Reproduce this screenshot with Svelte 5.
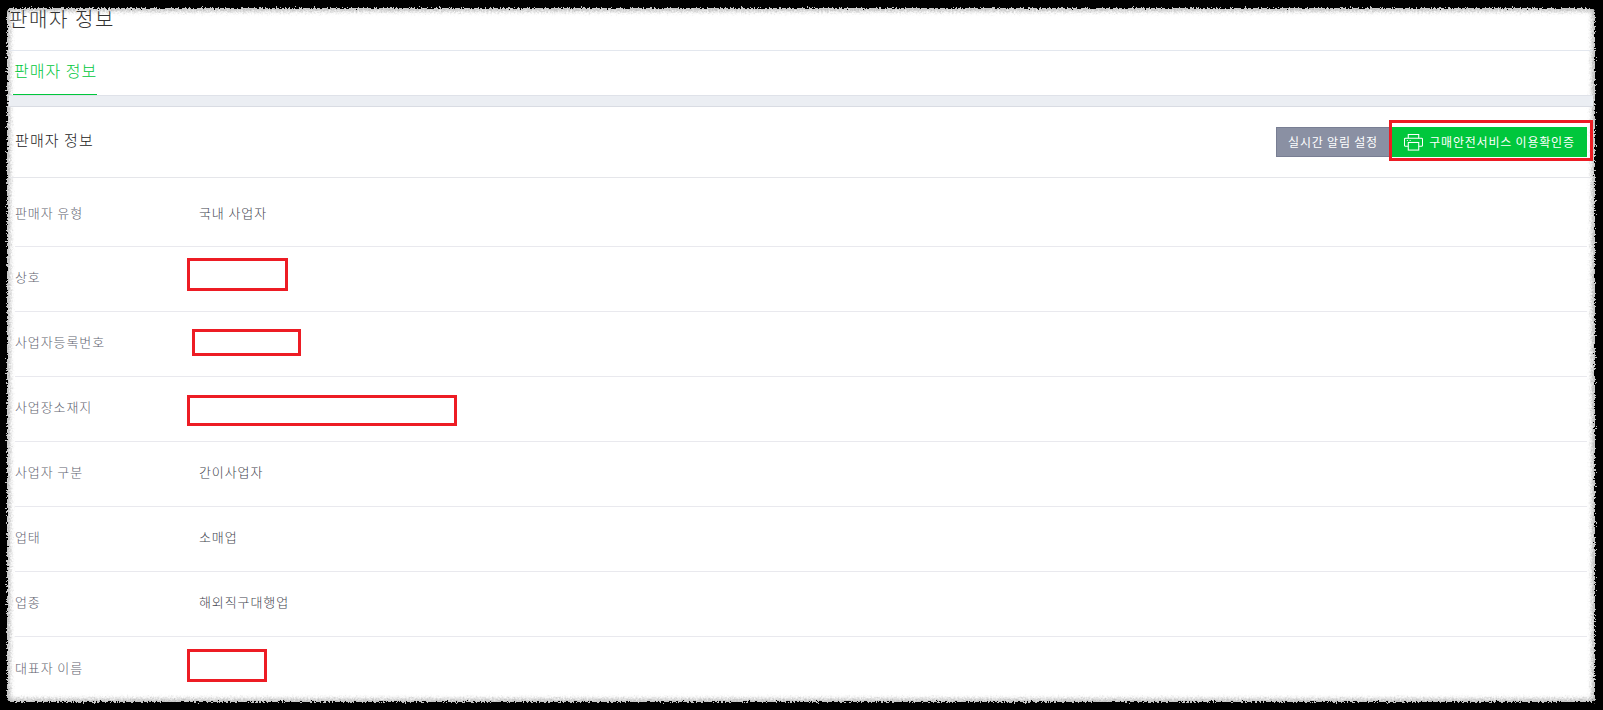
<script>
  const rows = [
    ['판매자 유형', '국내 사업자'],
    ['상호', ''],
    ['사업자등록번호', ''],
    ['사업장소재지', ''],
    ['사업자 구분', '간이사업자'],
    ['업태', '소매업'],
    ['업종', '해외직구대행업'],
    ['대표자 이름', '']
  ];
</script>

<svg class="defs" width="0" height="0" aria-hidden="true">
  <filter id="rough" x="-2%" y="-2%" width="104%" height="104%">
    <feTurbulence type="fractalNoise" baseFrequency="0.55" numOctaves="2" seed="4" />
    <feDisplacementMap in="SourceGraphic" scale="6" />
    <feGaussianBlur stdDeviation="0.6" />
  </filter>
</svg>

<div class="screen">
  <div class="paper"></div>
  <div class="page">
    <h1 class="title">판매자 정보</h1>
    <nav class="tabs"><span class="tab">판매자 정보</span></nav>
    <div class="band"></div>
    <header class="section">
      <h2>판매자 정보</h2>
      <div class="actions">
        <button class="btn gray">실시간 알림 설정</button>
        <button class="btn green">
          <svg width="19" height="18" viewBox="0 0 20 18" fill="none" stroke="#fff" stroke-width="1.1">
            <path d="M4.5 5V1.2h11V5" />
            <path d="M4.5 13.5H1.5a1 1 0 0 1-1-1V6a1 1 0 0 1 1-1h17a1 1 0 0 1 1 1v6.5a1 1 0 0 1-1 1h-3" />
            <rect x="4.5" y="9.5" width="11" height="8" />
            <path d="M3 7.5h1M6 7.5h1" />
          </svg>
          구매안전서비스 이용확인증
        </button>
      </div>
    </header>
    <div class="list">
      {#each rows as [label, value]}
        <div class="row">
          <div class="label">{label}</div>
          <div class="value">{value}</div>
        </div>
      {/each}
    </div>
  </div>
  <div class="mark m1"></div>
  <div class="mark m2"></div>
  <div class="mark m3"></div>
  <div class="mark m4"></div>
  <div class="mark m5"></div>
</div>

<style>
  :global(body) {
    margin: 0;
    background: #000;
  }
  .defs {
    position: absolute;
  }
  .screen {
    position: relative;
    width: 1603px;
    height: 710px;
    overflow: hidden;
    background: #000;
    font-family: "Noto Sans CJK KR", "Noto Sans", sans-serif;
    font-weight: 300;
  }
  .paper {
    position: absolute;
    inset: 8px 8px 8px 7px;
    background: #fff;
    border-radius: 5px;
    box-shadow: inset 0 0 4px 3px #bbb;
    filter: url(#rough);
  }
  .page {
    position: relative;
    display: flex;
    flex-direction: column;
    margin: 0 10px 0 9px;
  }
  .title {
    height: 51px;
    margin: 0;
    padding-top: 5px;
    box-sizing: border-box;
    border-bottom: 1px solid #e3e7ee;
    font-size: 20px;
    font-weight: 300;
    line-height: 28px;
    letter-spacing: 1.6px;
    color: #333;
  }
  .tabs {
    height: 44px;
    padding-left: 4px;
    display: flex;
  }
  .tab {
    padding: 0 0 0 1px;
    height: 44px;
    box-sizing: border-box;
    border-bottom: 1px solid #00c73c;
    font-size: 16px;
    line-height: 38px;
    letter-spacing: 1px;
    color: #00c73c;
  }
  .band {
    height: 10px;
    background: #ebeef3;
    border-top: 1px solid #dfe2e9;
    border-bottom: 1px solid #d9dce3;
  }
  .section {
    height: 71px;
    box-sizing: border-box;
    padding: 0 6px;
    display: flex;
    align-items: center;
    justify-content: space-between;
    border-bottom: 1px solid #e5e6ea;
  }
  .section h2 {
    margin: 0 0 5px;
    font-size: 15px;
    font-weight: 300;
    letter-spacing: 1.1px;
    color: #222;
  }
  .actions {
    display: flex;
    padding-bottom: 1px;
  }
  .btn {
    height: 30px;
    box-sizing: border-box;
    border: 0;
    padding: 0;
    display: flex;
    align-items: center;
    justify-content: center;
    font-family: inherit;
    font-size: 12px;
    font-weight: 400;
    letter-spacing: 0.8px;
    color: #fff;
  }
  .gray {
    width: 113px;
    background: #8a90a3;
    border: 1px solid #787e93;
    border-right: 0;
  }
  .green {
    width: 198px;
    gap: 6px;
    padding-left: 3px;
    background: #00c73c;
  }
  .list {
    padding: 0 6px;
  }
  .row {
    height: 65px;
    box-sizing: border-box;
    display: flex;
    align-items: center;
    padding-bottom: 5px;
    border-bottom: 1px solid #e9e9ee;
    font-size: 13px;
    letter-spacing: 0.9px;
    color: #5f6470;
  }
  .row:first-child {
    height: 69px;
    padding-bottom: 0;
  }
  .row:last-child {
    border-bottom: 0;
  }
  .label {
    width: 184px;
  }
  .value {
    color: #3f444e;
  }
  .mark {
    position: absolute;
    box-sizing: border-box;
    border: 3px solid #ed1c24;
  }
  .m1 { left: 187px; top: 258px; width: 101px; height: 33px; }
  .m2 { left: 192px; top: 329px; width: 109px; height: 27px; }
  .m3 { left: 187px; top: 395px; width: 270px; height: 31px; }
  .m4 { left: 187px; top: 649px; width: 80px; height: 33px; }
  .m5 { left: 1389px; top: 120px; width: 204px; height: 41px; }
</style>
